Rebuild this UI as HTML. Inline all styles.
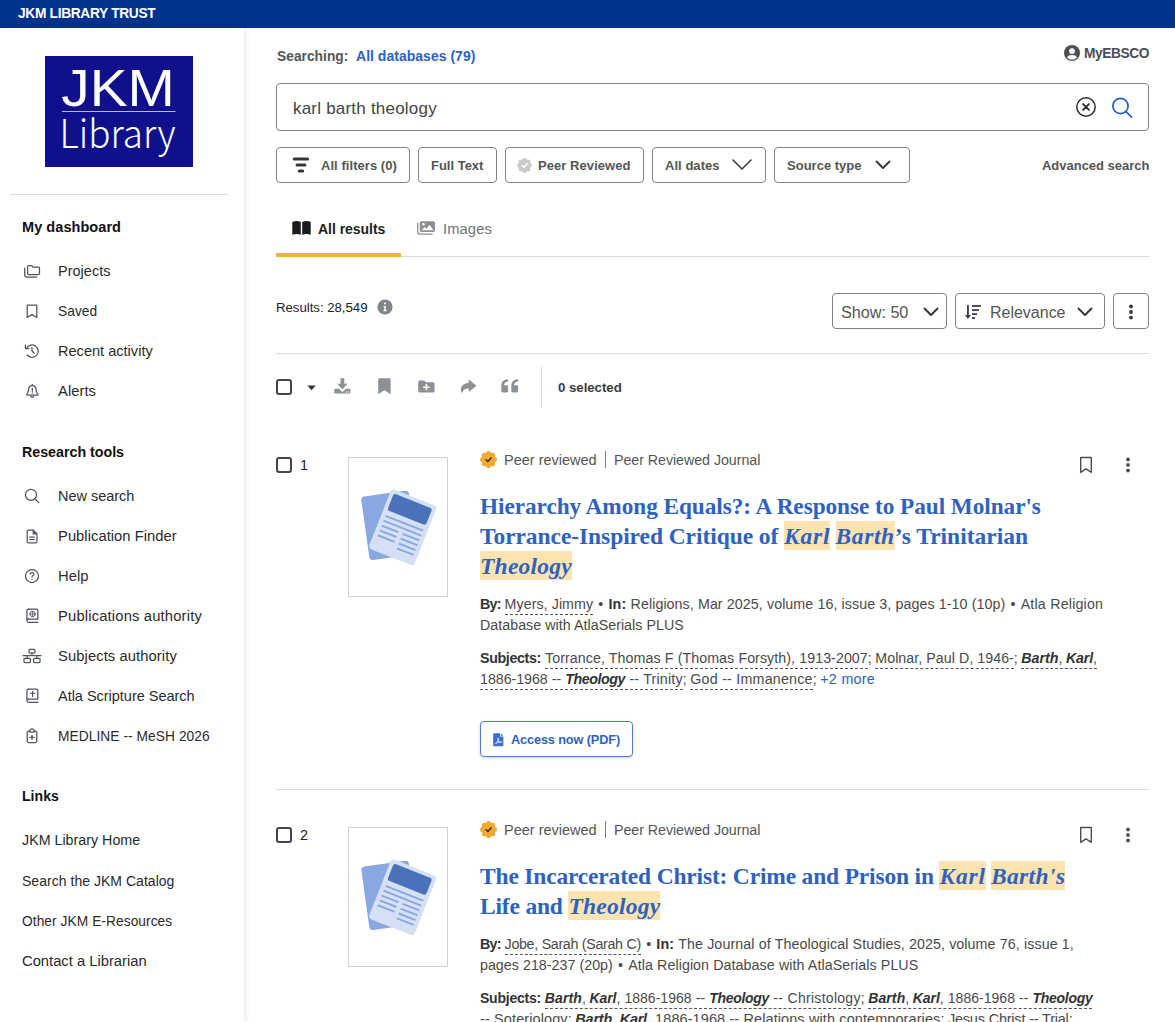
<!DOCTYPE html>
<html lang="en"><head><meta charset="utf-8"><title>JKM Library Trust - karl barth theology</title>
<style>
:root{--sans:"Liberation Sans",sans-serif;--serif:"Liberation Serif",serif;}
*{box-sizing:border-box;margin:0;padding:0}
html,body{width:1175px;height:1022px;overflow:hidden;background:#fff}
body{font-family:var(--sans);font-size:14px;color:#333;position:relative}
.a{position:absolute;white-space:nowrap;line-height:20px}
.b{font-weight:700}.sb{font-weight:600}
#top{left:0;top:0;width:1175px;height:28px;background:#00338d}
#toptxt{left:18px;top:3px;color:#fff;font-weight:700;font-size:14px;line-height:20px}
#side{left:0;top:28px;width:244px;height:994px;background:#fff;box-shadow:1px 0 6px rgba(0,0,0,.12)}
.hr{height:1px;background:#dcdcdc}
.nav{left:58px;font-size:14px;color:#2b2b2b}
.navh{left:22px;font-size:14px;font-weight:700;color:#111}
.lnk{left:22px;font-size:14px;color:#2b2b2b}
.ic{position:absolute}
.cb{width:16px;height:16px;border:2px solid #41464e;border-radius:3px;background:#fff}
.btn{position:absolute;border:1px solid #7d8189;border-radius:4px;background:#fff}
.btxt{font-size:13px;font-weight:600;color:#555}
.meta{font-size:14px;color:#4a4a4a;line-height:21px;word-spacing:.15px}
.meta b{color:#333;font-weight:600}
.u{border-bottom:1px dashed #555}
.title{font-family:var(--serif);font-weight:700;font-size:20px;line-height:30px;color:#2e62c1}
.hl{background:#fde3b0;font-style:italic}
.shl{font-weight:700;font-style:italic;color:#333}
.link{color:#2e62c1}
.bu{margin:0 1.25px}
.u{padding-bottom:2px}
.hl{padding:2px 0 1px}
</style></head><body>
<div class="a" id="top"></div>
<div class="a" id="toptxt" style="font-size: 13.75px; top: 4px;"><span style="letter-spacing: -0.32px;">JKM LIBRARY TRUST</span></div>
<div class="a" id="side"></div>
<svg class="ic" style="left:45px;top:56px" width="148" height="111" viewBox="0 0 148 111"><rect width="148" height="111" fill="#10108c"></rect><text x="16.300" y="49.500" font-family="'Liberation Sans',sans-serif" font-size="52" fill="#fff" textLength="113.500" lengthAdjust="spacingAndGlyphs">JKM</text><rect x="17" y="55" width="113.500" height="1" fill="#b9b9e3"></rect><text x="14.600" y="91.800" font-family="'Noto Sans CJK SC','Liberation Sans',sans-serif" font-weight="300" font-size="39.500" fill="#fff" textLength="116" lengthAdjust="spacingAndGlyphs">Library</text></svg>
<div class="a hr" style="left:10px;top:194px;width:218px"></div>

<div class="a navh" style="top: 217px; font-size: 14.5px;"><span style="letter-spacing: 0.06px;">My dashboard</span></div>
<div class="a nav" style="top: 261px; font-size: 14.5px;"><span style="letter-spacing: 0.01px;">Projects</span></div>
<div class="a nav" style="top: 302px; font-size: 13.75px;"><span style="letter-spacing: 0.03px;">Saved</span></div>
<div class="a nav" style="top: 341px; font-size: 14.5px;"><span style="letter-spacing: 0.03px;">Recent activity</span></div>
<div class="a nav" style="top: 381px; font-size: 14.75px;"><span style="letter-spacing: 0.05px;">Alerts</span></div>
<div class="a navh" style="top: 442px; font-size: 14.25px;"><span style="letter-spacing: -0.01px;">Research tools</span></div>
<div class="a nav" style="top: 486px; font-size: 14.5px;"><span style="letter-spacing: -0.03px;">New search</span></div>
<div class="a nav" style="top: 526px; font-size: 14.75px;"><span style="letter-spacing: 0.04px;">Publication Finder</span></div>
<div class="a nav" style="top: 566px; font-size: 14.75px;"><span style="letter-spacing: 0.04px;">Help</span></div>
<div class="a nav" style="top: 606px; font-size: 14.75px;"><span style="letter-spacing: 0.17px;">Publications authority</span></div>
<div class="a nav" style="top: 646px; font-size: 14.75px;"><span style="letter-spacing: 0.09px;">Subjects authority</span></div>
<div class="a nav" style="top: 686px; font-size: 14.5px;"><span style="letter-spacing: -0.02px;">Atla Scripture Search</span></div>
<div class="a nav" style="top: 727px; font-size: 13.75px;"><span style="letter-spacing: 0.06px;">MEDLINE -- MeSH 2026</span></div>
<div class="a navh" style="top: 786px; font-size: 14px;"><span style="letter-spacing: 0.05px;">Links</span></div>
<div class="a lnk" style="top: 830px; font-size: 14.25px;"><span style="letter-spacing: 0.01px;">JKM Library Home</span></div>
<div class="a lnk" style="top: 871px; font-size: 14px;"><span style="letter-spacing: 0.03px;">Search the JKM Catalog</span></div>
<div class="a lnk" style="top: 912px; font-size: 13.75px;"><span style="letter-spacing: 0.06px;">Other JKM E-Resources</span></div>
<div class="a lnk" style="top: 951px; font-size: 14.75px;"><span>Contact a Librarian</span></div>

<!-- main -->
<div class="a sb" style="left: 277px; top: 47px; font-size: 13.75px; color: rgb(85, 85, 85);"><span style="letter-spacing: 0.03px;">Searching:</span></div>
<div class="a sb" style="left:356px;top:46px;font-size:14px;color:#2e62c1"><span style="letter-spacing: 0.02px;">All databases (79)</span></div>
<div class="a sb" style="left: 1084px; top: 44px; font-size: 13.75px; color: rgb(74, 79, 87);"><span style="letter-spacing: -0.42px;">MyEBSCO</span></div>
<div class="btn" style="left:276px;top:83px;width:873px;height:48px"></div>
<div class="a" style="left: 293px; top: 98px; font-size: 17px; line-height: 22px; color: rgb(68, 68, 68);"><span style="letter-spacing: 0.21px;">karl barth theology</span></div>

<div class="btn" style="left:276px;top:147px;width:134px;height:36px"></div>
<div class="a btxt" style="left: 321px; top: 156px; font-size: 13px;"><span style="letter-spacing: 0.05px;">All filters (0)</span></div>
<div class="btn" style="left:418px;top:147px;width:79px;height:36px"></div>
<div class="a btxt" style="left: 431px; top: 156px; font-size: 13px;"><span style="letter-spacing: -0.01px;">Full Text</span></div>
<div class="btn" style="left:505px;top:147px;width:139px;height:36px"></div>
<div class="a btxt" style="left: 538px; top: 156px; font-size: 13px;"><span style="letter-spacing: 0.06px;">Peer Reviewed</span></div>
<div class="btn" style="left:652px;top:147px;width:114px;height:36px"></div>
<div class="a btxt" style="left: 665px; top: 156px; font-size: 13px;"><span style="letter-spacing: 0.04px;">All dates</span></div>
<div class="btn" style="left:774px;top:147px;width:136px;height:36px"></div>
<div class="a btxt" style="left: 787px; top: 156px; font-size: 13px;"><span style="letter-spacing: 0.01px;">Source type</span></div>
<div class="a btxt" style="left: 1042px; top: 156px; font-size: 13px;"><span style="letter-spacing: -0.02px;">Advanced search</span></div>

<div class="a sb" style="left:318px;top:219px;font-size:14px;color:#222"><span style="letter-spacing: -0.03px;">All results</span></div>
<div class="a" style="left: 443px; top: 219px; font-size: 14.75px; color: rgb(112, 115, 120);"><span style="letter-spacing: 0.09px;">Images</span></div>
<div class="a hr" style="left:276px;top:256px;width:873px"></div>
<div class="a" style="left:276px;top:253px;width:125px;height:4px;background:#f5b335"></div>

<div class="a" style="left: 276px; top: 298px; font-size: 13.25px; color: rgb(34, 34, 34);"><span style="letter-spacing: -0.04px;">Results: 28,549</span></div>
<div class="btn" style="left:832px;top:293px;width:115px;height:36px"></div>
<div class="a" style="left: 841px; top: 301px; font-size: 16.25px; line-height: 22px; color: rgb(85, 85, 85);"><span style="letter-spacing: -0.05px;">Show: 50</span></div>
<div class="btn" style="left:955px;top:293px;width:150px;height:36px"></div>
<div class="a" style="left: 990px; top: 302px; font-size: 16px; line-height: 22px; color: rgb(85, 85, 85);"><span style="letter-spacing: -0.01px;">Relevance</span></div>
<div class="btn" style="left:1113px;top:293px;width:36px;height:36px"></div>
<div class="a hr" style="left:276px;top:353px;width:873px"></div>
<div class="a" style="left:541px;top:366px;width:1px;height:42px;background:#dcdcdc"></div>
<div class="a sb" style="left: 558px; top: 378px; font-size: 13.25px; color: rgb(58, 61, 66);"><span style="letter-spacing: -0.04px;">0 selected</span></div>

<!-- result 1 -->
<div class="a" style="left: 300px; top: 455px; font-size: 14.5px; color: rgb(34, 34, 34);"><span style="letter-spacing: -0.06px;">1</span></div>
<div class="a" style="left:348px;top:457px;width:100px;height:140px;border:1px solid #d0d0d0"></div>
<div class="a" style="left: 504px; top: 450px; font-size: 14.5px; color: rgb(85, 85, 85);"><span>Peer reviewed</span></div>
<div class="a" style="left:605px;top:451px;width:1px;height:17px;background:#7a7d83"></div>
<div class="a" style="left: 614px; top: 450px; font-size: 14.25px; color: rgb(85, 85, 85);"><span style="letter-spacing: -0.05px;">Peer Reviewed Journal</span></div>
<div class="a title" style="left: 480px; top: 491px; font-size: 23.25px;"><span style="letter-spacing: -0.05px;">Hierarchy Among Equals?: A Response to Paul Molnar's</span></div>
<div class="a title" style="left: 480px; top: 521px; font-size: 23.5px;"><span style="letter-spacing: -0.07px;">Torrance-Inspired Critique of </span><span class="hl"><span style="letter-spacing: 0.78px;">Karl</span></span><span style="letter-spacing: -0.67px;"> </span><span class="hl"><span style="letter-spacing: 0.61px;">Barth</span></span><span style="letter-spacing: -0.01px;">’s Trinitarian</span></div>
<div class="a title" style="left: 480px; top: 551px; font-size: 23.5px;"><span class="hl"><span style="letter-spacing: 0.24px;">Theology</span></span></div>
<div class="a meta" style="left: 480px; top: 594px; font-size: 14.25px;"><b><span style="letter-spacing: -0.73px;">By:</span></b><span style="letter-spacing: -0.31px;"> </span><span class="u"><span style="letter-spacing: 0.04px;">Myers, Jimmy</span></span><span class="bu"><span style="letter-spacing: -0.12px;"> • </span></span><b><span style="letter-spacing: 0.19px;">In:</span></b><span style="letter-spacing: 0.06px;"> Religions, Mar 2025, volume 16, issue 3, pages 1-10 (10p)</span><span class="bu"><span style="letter-spacing: -0.12px;"> • </span></span><span style="letter-spacing: 0.18px;">Atla Religion</span></div>
<div class="a meta" style="left: 480px; top: 615px; font-size: 14.25px;"><span style="letter-spacing: 0.02px;">Database with AtlaSerials PLUS</span></div>
<div class="a meta" style="left: 480px; top: 648px; font-size: 14.25px;"><b><span style="letter-spacing: -0.35px;">Subjects:</span></b><span style="letter-spacing: -0.06px;"> </span><span class="u"><span style="letter-spacing: 0.05px;">Torrance, Thomas F (Thomas Forsyth), 1913-2007</span></span><span style="letter-spacing: -0.27px;">; </span><span class="u"><span style="letter-spacing: 0.01px;">Molnar, Paul D, 1946-</span></span><span style="letter-spacing: -0.27px;">; </span><span class="u"><span class="shl"><span style="letter-spacing: -0.03px;">Barth</span></span><span style="letter-spacing: -0.27px;">, </span><span class="shl"><span style="letter-spacing: -0.19px;">Karl</span></span><span style="letter-spacing: -0.2px;">,</span></span></div>
<div class="a meta" style="left: 480px; top: 669px; font-size: 14.25px;"><span class="u"><span style="letter-spacing: -0.05px;">1886-1968 -- </span><span class="shl"><span style="letter-spacing: -0.43px;">Theology</span></span><span style="letter-spacing: 0.17px;"> -- Trinity</span></span><span style="letter-spacing: -0.27px;">; </span><span class="u"><span style="letter-spacing: 0.21px;">God -- Immanence</span></span><span style="letter-spacing: -0.27px;">; </span><span class="link"><span style="letter-spacing: 0.28px;">+2 more</span></span></div>
<div class="btn" style="left:480px;top:721px;width:153px;height:36px;border-color:#4c7dd4;box-shadow:0 1px 3px rgba(0,0,0,.18)"></div>
<div class="a sb" style="left: 511px; top: 730px; font-size: 12.75px; color: rgb(46, 98, 193);"><span style="letter-spacing: -0.14px;">Access now (PDF)</span></div>
<div class="a hr" style="left:276px;top:789px;width:873px"></div>

<!-- result 2 -->
<div class="a" style="left: 300px; top: 825px; font-size: 14.5px; color: rgb(34, 34, 34);"><span style="letter-spacing: -0.06px;">2</span></div>
<div class="a" style="left:348px;top:827px;width:100px;height:140px;border:1px solid #d0d0d0"></div>
<div class="a" style="left: 504px; top: 820px; font-size: 14.5px; color: rgb(85, 85, 85);"><span>Peer reviewed</span></div>
<div class="a" style="left:605px;top:821px;width:1px;height:17px;background:#7a7d83"></div>
<div class="a" style="left: 614px; top: 820px; font-size: 14.25px; color: rgb(85, 85, 85);"><span style="letter-spacing: -0.05px;">Peer Reviewed Journal</span></div>
<div class="a title" style="left: 480px; top: 861px; font-size: 23.5px;"><span style="letter-spacing: -0.18px;">The Incarcerated Christ: Crime and Prison in </span><span class="hl"><span style="letter-spacing: 0.78px;">Karl</span></span><span style="letter-spacing: -0.67px;"> </span><span class="hl"><span style="letter-spacing: 0.38px;">Barth's</span></span></div>
<div class="a title" style="left: 480px; top: 891px; font-size: 23.5px;"><span style="letter-spacing: -0.19px;">Life and </span><span class="hl"><span style="letter-spacing: 0.24px;">Theology</span></span></div>
<div class="a meta" style="left: 480px; top: 934px; font-size: 14.25px;"><b><span style="letter-spacing: -0.73px;">By:</span></b><span style="letter-spacing: -0.31px;"> </span><span class="u"><span style="letter-spacing: -0.32px;">Jobe, Sarah (Sarah C)</span></span><span class="bu"><span style="letter-spacing: -0.12px;"> • </span></span><b><span style="letter-spacing: 0.19px;">In:</span></b><span style="letter-spacing: 0.08px;"> The Journal of Theological Studies, 2025, volume 76, issue 1,</span></div>
<div class="a meta" style="left: 480px; top: 955px; font-size: 14.25px;"><span style="letter-spacing: 0.01px;">pages 218-237 (20p)</span><span class="bu"><span style="letter-spacing: -0.12px;"> • </span></span><span style="letter-spacing: 0.06px;">Atla Religion Database with AtlaSerials PLUS</span></div>
<div class="a meta" style="left: 480px; top: 988px; font-size: 14px;"><b><span style="letter-spacing: -0.22px;">Subjects:</span></b><span style="letter-spacing: -0.25px;"> </span><span class="u"><span class="shl"><span style="letter-spacing: 0.1px;">Barth</span></span><span style="letter-spacing: -0.2px;">, </span><span class="shl"><span style="letter-spacing: -0.07px;">Karl</span></span><span style="letter-spacing: 0.03px;">, 1886-1968 -- </span><span class="shl"><span style="letter-spacing: -0.29px;">Theology</span></span><span style="letter-spacing: 0.28px;"> -- Christology</span></span><span style="letter-spacing: -0.2px;">; </span><span class="u"><span class="shl"><span style="letter-spacing: 0.1px;">Barth</span></span><span style="letter-spacing: -0.2px;">, </span><span class="shl"><span style="letter-spacing: -0.07px;">Karl</span></span><span style="letter-spacing: 0.03px;">, 1886-1968 -- </span><span class="shl"><span style="letter-spacing: -0.29px;">Theology</span></span></span></div>
<div class="a meta" style="left: 480px; top: 1009px; font-size: 14.5px;"><span class="u"><span style="letter-spacing: 0.09px;">-- Soteriology</span></span><span style="letter-spacing: -0.34px;">; </span><span class="u"><span class="shl"><span style="letter-spacing: -0.16px;">Barth</span></span><span style="letter-spacing: -0.34px;">, </span><span class="shl"><span style="letter-spacing: -0.31px;">Karl</span></span><span style="letter-spacing: 0.08px;">, 1886-1968 -- Relations with contemporaries</span></span><span style="letter-spacing: -0.34px;">; </span><span class="u"><span style="letter-spacing: -0.22px;">Jesus Christ -- Trial</span></span><span style="letter-spacing: -0.27px;">;</span></div>
<!-- ICONS -->
<!-- sidebar icons: stroke gray -->
<svg class="ic" style="left:23px;top:264px" width="18" height="15" viewBox="0 0 18 15" fill="none" stroke="#50545c" stroke-width="1.25" stroke-linejoin="round" stroke-linecap="round"><path d="M4.6 9.6V2.6q0-1.1 1.1-1.1h2.9l1.5 1.6h5.3q1.1 0 1.1 1.1v5.4q0 1.1-1.1 1.1H5.7q-1.1 0-1.1-1.1z"></path><path d="M1.7 4.2v6.9q0 1.9 1.9 1.9h10"></path></svg>
<svg class="ic" style="left:26px;top:304px" width="12" height="15" viewBox="0 0 12 15" fill="none" stroke="#50545c" stroke-width="1.25" stroke-linejoin="round"><path d="M1.2 1.2h9.6v12.3L6 10.6 1.2 13.5z"></path></svg>
<svg class="ic" style="left:24px;top:343px" width="16" height="16" viewBox="0 0 16 16" fill="none" stroke="#50545c" stroke-width="1.25" stroke-linecap="round" stroke-linejoin="round"><path d="M2.6 5.2A6.2 6.2 0 1 1 3.2 12"></path><path d="M1.4 2.2v3.4h3.4"></path><path d="M8 4.6V8l2.2 2"></path></svg>
<svg class="ic" style="left:25px;top:383px" width="15" height="16" viewBox="0 0 15 16" fill="none" stroke="#50545c" stroke-width="1.250" stroke-linecap="round" stroke-linejoin="round"><path d="M7.300 1.300v1.200M7.300 2.500C4.700 2.500 3.500 4.500 3.500 6.800c0 2-.4 3-1.600 4.100-.5.500-.2 1.100.4 1.100h10c.6 0 .9-.6.400-1.100-1.200-1.100-1.600-2.100-1.600-4.100 0-2.300-1.200-4.300-3.800-4.300z"></path><path d="M6 13.600a1.400 1.400 0 0 0 2.600 0"></path><path d="M7.300 5.300v3M7.300 9.900v.1"></path></svg>
<svg class="ic" style="left:24px;top:488px" width="16" height="16" viewBox="0 0 16 16" fill="none" stroke="#50545c" stroke-width="1.25" stroke-linecap="round"><circle cx="7" cy="6.800" r="5.500"></circle><path d="M11 10.800l3.800 3.800"></path></svg>
<svg class="ic" style="left:26px;top:529px" width="12" height="15" viewBox="0 0 12 15" fill="none" stroke="#50545c" stroke-width="1.25" stroke-linejoin="round" stroke-linecap="round"><path d="M2.400 1.100h4.800l3.700 3.700v7.900q0 1.200-1.200 1.200H2.400q-1.200 0-1.200-1.200V2.300q0-1.200 1.200-1.200z"></path><path d="M7.200 1.100v3.700h3.700" fill="#50545c"></path><path d="M3.700 8.200h4.600M3.700 10.700h4.600"></path></svg>
<svg class="ic" style="left:24px;top:568px" width="16" height="16" viewBox="0 0 16 16" fill="none" stroke="#50545c" stroke-width="1.25" stroke-linecap="round"><circle cx="8" cy="8" r="6.500"></circle><path d="M6.200 6.300c0-1.100.9-1.700 1.900-1.700s1.800.7 1.800 1.600c0 1.400-1.900 1.300-1.900 2.800M8 11v.2" stroke-width="1.200"></path></svg>
<svg class="ic" style="left:26px;top:608px" width="13" height="16" viewBox="0 0 13 16" fill="none" stroke="#50545c" stroke-width="1.25" stroke-linejoin="round" stroke-linecap="round"><path d="M2.600 1.100h8.300q.9 0 .9.900v9.200H2.600"></path><path d="M11.800 14.400H2.600a1.600 1.600 0 0 1 0-3.200M.9 12.800V2.800q0-1.700 1.700-1.700"></path><circle cx="6.600" cy="6" r="2.700" stroke-width=".95"></circle><path d="M3.900 6h5.400M6.600 3.300v5.400" stroke-width=".8"></path></svg>
<svg class="ic" style="left:22px;top:648px" width="20" height="16" viewBox="0 0 20 16" fill="none" stroke="#50545c" stroke-width="1.250" stroke-linejoin="round" stroke-linecap="round"><rect x="7.100" y="1.300" width="5.800" height="3.700" rx=".7"></rect><rect x="2" y="10.300" width="6.400" height="4.200" rx=".7"></rect><rect x="11.600" y="10.300" width="6.400" height="4.200" rx=".7"></rect><path d="M1 7.700h18M10 5v2.700M5.200 7.700v2.600M14.800 7.700v2.600"></path></svg>
<svg class="ic" style="left:26px;top:688px" width="13" height="16" viewBox="0 0 13 16" fill="none" stroke="#50545c" stroke-width="1.25" stroke-linejoin="round" stroke-linecap="round"><path d="M2.600 1.100h8.300q.9 0 .9.900v9.200H2.600"></path><path d="M11.800 14.400H2.600a1.600 1.600 0 0 1 0-3.200M.9 12.800V2.800q0-1.700 1.700-1.700"></path><path d="M6.600 3.400v5.200M4.600 5.300h4" stroke-width="1.200"></path></svg>
<svg class="ic" style="left:26px;top:728px" width="12" height="16" viewBox="0 0 12 16" fill="none" stroke="#50545c" stroke-width="1.25" stroke-linejoin="round" stroke-linecap="round"><path d="M4 3H2.400q-1.200 0-1.200 1.200v9.100q0 1.200 1.200 1.200h7.200q1.200 0 1.200-1.200V4.200q0-1.200-1.200-1.200H8"></path><path d="M4 4.200V2.900a2 2 0 0 1 4 0v1.300z"></path><path d="M6 7.400v4M4 9.400h4" stroke-width="1.400"></path></svg>

<!-- user icon -->
<svg class="ic" style="left:1064px;top:45px" width="16" height="16" viewBox="0 0 16 16"><circle cx="8" cy="8" r="8" fill="#4a4f57"></circle><circle cx="8" cy="6.100" r="2.900" fill="#fff"></circle><path d="M3 12.600c.7-2 2.300-2.700 5-2.700s4.300.7 5 2.700a6.800 6.800 0 0 1-10 0z" fill="#fff"></path></svg>
<!-- clear + search -->
<svg class="ic" style="left:1075px;top:96px" width="22" height="22" viewBox="0 0 22 22" fill="none" stroke="#2b2d31" stroke-linecap="round"><circle cx="11" cy="11" r="9.200" stroke-width="1.500"></circle><path d="M8.100 8.100l5.800 5.800M13.900 8.100l-5.800 5.800" stroke-width="1.900"></path></svg>
<svg class="ic" style="left:1110px;top:95.500px" width="24" height="24" viewBox="0 0 24 24" fill="none" stroke="#2760c4" stroke-width="1.700" stroke-linecap="round"><circle cx="10.500" cy="10" r="7.600"></circle><path d="M16 15.600l5.600 5.600"></path></svg>
<!-- filter icon -->
<svg class="ic" style="left:291px;top:156px" width="20" height="18" viewBox="0 0 20 18" fill="none" stroke="#33363d" stroke-width="3" stroke-linecap="round"><path d="M3.200 2.900h13.400M6.100 9h7.800M8.300 15h3.400"></path></svg>
<!-- peer reviewed gray badge -->
<svg class="ic" style="left:517px;top:158px" width="15" height="15" viewBox="0 0 16 16"><g fill="#c9cacc"><circle cx="8" cy="8" r="6.300"></circle><circle cx="13.60" cy="8.00" r="2.400"></circle><circle cx="11.96" cy="11.96" r="2.400"></circle><circle cx="8.00" cy="13.60" r="2.400"></circle><circle cx="4.04" cy="11.96" r="2.400"></circle><circle cx="2.40" cy="8.00" r="2.400"></circle><circle cx="4.04" cy="4.04" r="2.400"></circle><circle cx="8.00" cy="2.40" r="2.400"></circle><circle cx="11.96" cy="4.04" r="2.400"></circle></g><path d="M5.500 8.200l1.800 1.800 3.300-3.700" fill="none" stroke="#fff" stroke-width="1.600" stroke-linecap="round" stroke-linejoin="round"></path></svg>
<!-- chevrons -->
<svg class="ic" style="left:731px;top:158px" width="22" height="13" viewBox="0 0 22 13" fill="none" stroke="#33363d" stroke-width="1.500" stroke-linecap="round" stroke-linejoin="round"><path d="M2 2l9 9 9-9"></path></svg>
<svg class="ic" style="left:875px;top:160px" width="16" height="10" viewBox="0 0 16 10" fill="none" stroke="#33363d" stroke-width="1.900" stroke-linecap="round" stroke-linejoin="round"><path d="M1.500 1.500L8 8l6.500-6.500"></path></svg>
<svg class="ic" style="left:923px;top:307px" width="16" height="10" viewBox="0 0 16 10" fill="none" stroke="#33363d" stroke-width="1.900" stroke-linecap="round" stroke-linejoin="round"><path d="M1.500 1.500L8 8l6.500-6.500"></path></svg>
<svg class="ic" style="left:1077px;top:307px" width="16" height="10" viewBox="0 0 16 10" fill="none" stroke="#33363d" stroke-width="1.900" stroke-linecap="round" stroke-linejoin="round"><path d="M1.500 1.500L8 8l6.500-6.500"></path></svg>
<!-- book icon (all results) -->
<svg class="ic" style="left:292px;top:220px" width="19" height="16" viewBox="0 0 19 16"><path fill="#1a1c20" d="M.3 2.100C2.800.6 6 .6 8.800 1.900v12.900C6 13.700 2.800 13.800.3 14.700zM18.700 2.100C16.200.6 13 .6 10.200 1.900v12.900c2.800-1.100 6-1 8.500-.1z"></path></svg>
<!-- images icon -->
<svg class="ic" style="left:416px;top:220px" width="20" height="16" viewBox="0 0 20 16"><path d="M1.700 3.300v8.800q0 2 2 2h12.500" fill="none" stroke="#8a8d93" stroke-width="1.300" stroke-linecap="round"></path><rect x="3.800" y="1.300" width="15.200" height="10.700" rx="1.700" fill="#8a8d93"></rect><circle cx="7.400" cy="4.300" r="1.300" fill="#fff"></circle><path d="M5.600 10.300l3.200-3.300 1.700 1.700 3-3.900 4 5.500z" fill="#fff"></path></svg>
<!-- info -->
<svg class="ic" style="left:377px;top:299px" width="16" height="16" viewBox="0 0 16 16"><circle cx="8" cy="8" r="7.600" fill="#808389"></circle><circle cx="8" cy="4.500" r="1.100" fill="#fff"></circle><path d="M6.500 7h2.300v4.200h.9v1.100H6.400v-1.100h.9V8.100h-.8z" fill="#fff"></path></svg>
<!-- sort icon -->
<svg class="ic" style="left:963px;top:302px" width="20" height="18" viewBox="0 0 20 18" fill="#3c4047"><rect x="4" y="3.100" width="1.900" height="10.500"></rect><path d="M1.900 13h6.100L4.950 16.900z"></path><rect x="9" y="3.100" width="9" height="1.800"></rect><rect x="9" y="7.200" width="7" height="1.800"></rect><rect x="9" y="11.200" width="5" height="1.800"></rect><rect x="9" y="15.100" width="3" height="1.800"></rect></svg>
<!-- kebab -->
<svg class="ic" style="left:1127px;top:303px" width="8" height="18" viewBox="0 0 8 18" fill="#33363d"><circle cx="4" cy="3.400" r="1.900"></circle><circle cx="4" cy="9" r="1.900"></circle><circle cx="4" cy="14.600" r="1.900"></circle></svg>

<!-- toolbar -->
<div class="a cb" style="left:276px;top:379px"></div>
<svg class="ic" style="left:307px;top:385px" width="9" height="6" viewBox="0 0 9 6"><path d="M.3.600h8.400L4.500 5.300z" fill="#33363d"></path></svg>
<svg class="ic" style="left:334px;top:378px" width="17" height="16" viewBox="0 0 17 16" fill="#8d9096"><path d="M6.500.3h3.800v5.500h3.300L8.400 11.200 3.200 5.800h3.300z"></path><path d="M1.100 10.800h3.800l3.500 3.300 3.500-3.300h3.800q.8 0 .8.800v3.200q0 .8-.8.800H1.100q-.8 0-.8-.8v-3.200q0-.8.800-.8z"></path><circle cx="12.300" cy="14" r=".7" fill="#fff"></circle><circle cx="14.600" cy="14" r=".7" fill="#fff"></circle></svg>
<svg class="ic" style="left:378px;top:378px" width="13" height="17" viewBox="0 0 13 17"><path d="M.2 1.600q0-1.300 1.300-1.300h9.800q1.300 0 1.300 1.300v14.600L6.400 12.300.2 16.200z" fill="#8d9096"></path></svg>
<svg class="ic" style="left:418px;top:380px" width="17" height="13" viewBox="0 0 17 13"><path d="M1.700.4h4.600l1.800 1.800h7q1.500 0 1.500 1.500v7.200q0 1.500-1.500 1.500H1.700q-1.500 0-1.500-1.500V1.900Q.2.400 1.700.4z" fill="#8d9096"></path><path d="M8.400 4.600v5.200M5.800 7.200H11" stroke="#fff" stroke-width="1.600" stroke-linecap="round"></path></svg>
<svg class="ic" style="left:459px;top:379px" width="18" height="15" viewBox="0 0 18 15"><path d="M9.800.4l7.700 6.300-7.700 6.300V9.400C6.300 9.400 4.300 10.200 2.900 14.300.2 9.200 2.800 4.200 9.800 3.900z" fill="#8d9096"></path></svg>
<svg class="ic" style="left:501px;top:379px" width="18" height="14" viewBox="0 0 18 14" fill="#8d9096"><path id="q" d="M.3 7C.3 2.800 2.500.500 7 .2v2.400C4.400 2.900 3.100 4.200 3 6.300h2.700q1.400 0 1.400 1.400v4.400q0 1.400-1.400 1.400H1.700Q.3 13.500.3 12.100z"></path><path d="M10.300 7c0-4.200 2.200-6.500 6.700-6.800v2.400c-2.600.3-3.900 1.600-4 3.700h2.700q1.400 0 1.400 1.400v4.400q0 1.400-1.400 1.400h-4q-1.400 0-1.400-1.400z"></path></svg>

<!-- result icons -->
<div class="a cb" style="left:276px;top:457px"></div>
<div class="a cb" style="left:276px;top:827px"></div>
<svg class="ic" style="left:480px;top:451px" width="17" height="17" viewBox="0 0 16 16"><g fill="#f3a932"><circle cx="8" cy="8" r="6.300"></circle><circle cx="13.60" cy="8.00" r="2.400"></circle><circle cx="11.96" cy="11.96" r="2.400"></circle><circle cx="8.00" cy="13.60" r="2.400"></circle><circle cx="4.04" cy="11.96" r="2.400"></circle><circle cx="2.40" cy="8.00" r="2.400"></circle><circle cx="4.04" cy="4.04" r="2.400"></circle><circle cx="8.00" cy="2.40" r="2.400"></circle><circle cx="11.96" cy="4.04" r="2.400"></circle></g><path d="M5.700 8.200l1.700 1.700 3-3.400" fill="none" stroke="#3a2f1c" stroke-width="1.400" stroke-linecap="round" stroke-linejoin="round"></path></svg>
<svg class="ic" style="left:1079px;top:456px" width="14" height="18" viewBox="0 0 14 18" fill="none" stroke="#4a4f57" stroke-width="1.400" stroke-linejoin="round"><path d="M1.700 1.500h10.600v14.800L7 12.800l-5.300 3.500z"></path></svg>
<svg class="ic" style="left:1124px;top:457px" width="8" height="16" viewBox="0 0 8 16" fill="#4a4f57"><circle cx="4" cy="2.500" r="1.900"></circle><circle cx="4" cy="8" r="1.900"></circle><circle cx="4" cy="13.500" r="1.900"></circle></svg>
<svg class="ic" style="left:349px;top:458px" width="98" height="138" viewBox="349 458 98 138">
<g transform="rotate(-8 389.100 525.400)"><rect x="365.100" y="493.400" width="48" height="64" rx="3.500" fill="#8aa8e0"></rect></g>
<g transform="rotate(21.500 402.700 527.300)"><rect x="378.200" y="495.300" width="49" height="64" rx="3.500" fill="#d5e0f5"></rect><rect x="382" y="499" width="41.400" height="18" rx="2.500" fill="#4a72ba"></rect>
<g stroke="#8aa8e0" stroke-width="1.900"><path d="M382.500 523h40.500M382.500 528.200h40.500M382.500 533.400h18M405 533.400h18M382.500 538.600h18M405 538.600h18M382.500 543.800h18M405 543.800h18M405 549h18"></path></g></g></svg>
<svg class="ic" style="left:480px;top:821px" width="17" height="17" viewBox="0 0 16 16"><g fill="#f3a932"><circle cx="8" cy="8" r="6.300"></circle><circle cx="13.60" cy="8.00" r="2.400"></circle><circle cx="11.96" cy="11.96" r="2.400"></circle><circle cx="8.00" cy="13.60" r="2.400"></circle><circle cx="4.04" cy="11.96" r="2.400"></circle><circle cx="2.40" cy="8.00" r="2.400"></circle><circle cx="4.04" cy="4.04" r="2.400"></circle><circle cx="8.00" cy="2.40" r="2.400"></circle><circle cx="11.96" cy="4.04" r="2.400"></circle></g><path d="M5.700 8.200l1.700 1.700 3-3.400" fill="none" stroke="#3a2f1c" stroke-width="1.400" stroke-linecap="round" stroke-linejoin="round"></path></svg>
<svg class="ic" style="left:1079px;top:826px" width="14" height="18" viewBox="0 0 14 18" fill="none" stroke="#4a4f57" stroke-width="1.400" stroke-linejoin="round"><path d="M1.700 1.500h10.600v14.800L7 12.800l-5.300 3.500z"></path></svg>
<svg class="ic" style="left:1124px;top:827px" width="8" height="16" viewBox="0 0 8 16" fill="#4a4f57"><circle cx="4" cy="2.500" r="1.900"></circle><circle cx="4" cy="8" r="1.900"></circle><circle cx="4" cy="13.500" r="1.900"></circle></svg>
<svg class="ic" style="left:349px;top:828px" width="98" height="138" viewBox="349 458 98 138">
<g transform="rotate(-8 389.100 525.400)"><rect x="365.100" y="493.400" width="48" height="64" rx="3.500" fill="#8aa8e0"></rect></g>
<g transform="rotate(21.500 402.700 527.300)"><rect x="378.200" y="495.300" width="49" height="64" rx="3.500" fill="#d5e0f5"></rect><rect x="382" y="499" width="41.400" height="18" rx="2.500" fill="#4a72ba"></rect>
<g stroke="#8aa8e0" stroke-width="1.900"><path d="M382.500 523h40.500M382.500 528.200h40.500M382.500 533.400h18M405 533.400h18M382.500 538.600h18M405 538.600h18M382.500 543.800h18M405 543.800h18M405 549h18"></path></g></g></svg>
<svg class="ic" style="left:492.700px;top:733px" width="11.500" height="13.500" viewBox="0 0 12 14"><path d="M1 .2h6.300v3.500h3.500V13q0 .8-.8.800H1q-.8 0-.8-.8V1Q.2.200 1 .2zM8.100.3l2.600 2.600H8.100z" fill="#3b6fd0"></path><path d="M2.600 10.900c1.200-.4 2.300-2 2.800-3.500.4-1.200.3-2.300-.2-2.300s-.5 1.100.1 2.400c.6 1.300 1.800 2.500 3.300 2.400 1.100-.1.600-1-.9-.7-1.700.3-3.600.9-5.100 1.700z" fill="none" stroke="#fff" stroke-width=".8"></path></svg>

</body></html>
